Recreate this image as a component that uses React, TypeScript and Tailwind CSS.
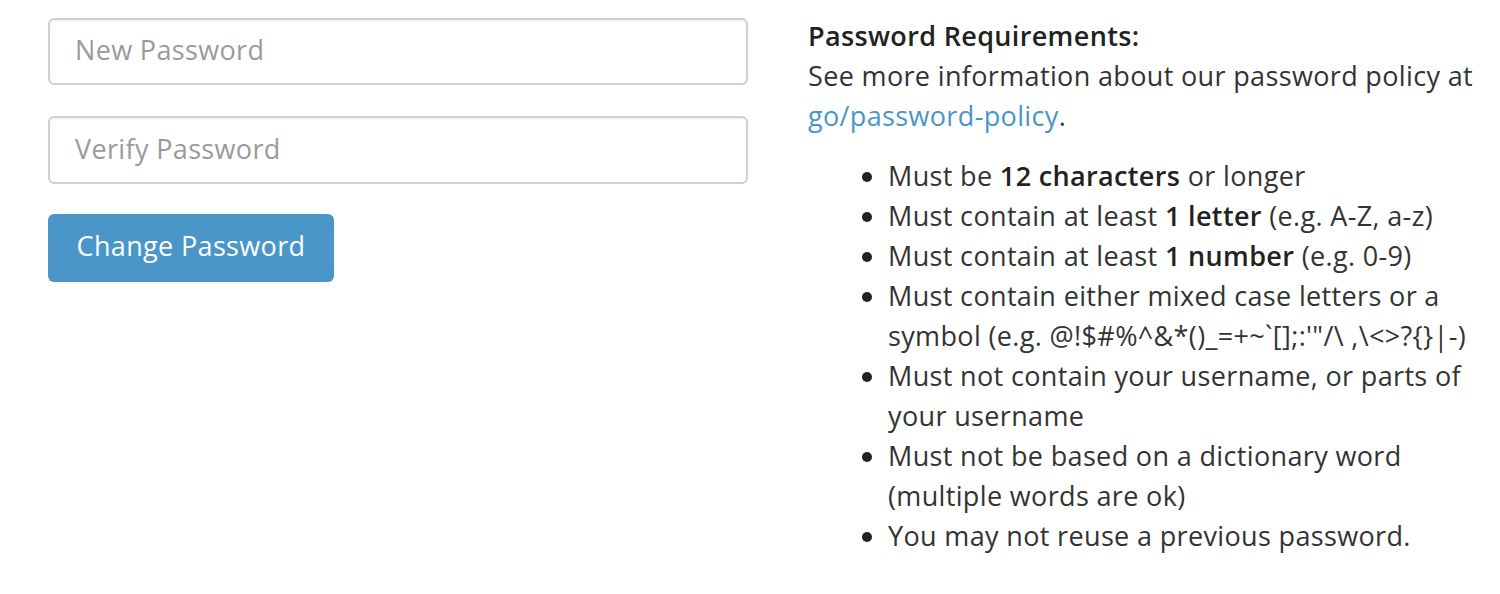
export default function App() {
  const items: React.ReactNode[] = [
    <>Must be <b className="font-semibold text-[#222]">12 characters</b> or longer</>,
    <>Must contain at least <b className="font-semibold text-[#222]">1 letter</b> (e.g. A-Z, a-z)</>,
    <>Must contain at least <b className="font-semibold text-[#222]">1 number</b> (e.g. 0-9)</>,
    <>Must contain either mixed case letters or a symbol (e.g. @!$#%^&amp;*()_=+~`[];:'"/\ ,\&lt;&gt;?{'{}'}|-)</>,
    <>Must not contain your username, or parts of your username</>,
    <>Must not be based on a dictionary word (multiple words are ok)</>,
    <>You may not reuse a previous password.</>,
  ]

  return (
    <div className="min-h-[594px] bg-white font-['Open_Sans',sans-serif] text-[27px] leading-[40px] tracking-[0.35px] text-[#333]">
      <div className="flex gap-[60px] pl-[48px] pt-[18px]">
        <form className="flex w-[700px] shrink-0 flex-col" onSubmit={(e) => e.preventDefault()}>
          <input
            type="password"
            placeholder="New Password"
            className="h-[67px] w-full rounded-[6px] border-2 border-[#d0d0d0] px-[25px] pb-[4px] text-[27px] tracking-[0.35px] text-[#333] shadow-[inset_0_1px_2px_rgba(0,0,0,0.08)] outline-none placeholder:text-[#9a9a9a]"
          />
          <input
            type="password"
            placeholder="Verify Password"
            className="mt-[31px] h-[68px] w-full rounded-[6px] border-2 border-[#d0d0d0] px-[25px] pb-[4px] text-[27px] tracking-[0.35px] text-[#333] shadow-[inset_0_1px_2px_rgba(0,0,0,0.08)] outline-none placeholder:text-[#9a9a9a]"
          />
          <button
            type="submit"
            className="mt-[30px] h-[68px] w-[286px] rounded-[6px] bg-[#4a96c9] pb-[4px] text-[27px] tracking-[0.35px] text-white"
          >
            Change Password
          </button>
        </form>

        <div className="-mt-[2px] w-[690px]">
          <h3 className="font-semibold text-[#222]">Password Requirements:</h3>
          <p>
            See more information about our password policy at{' '}
            <a href="#" className="text-[#4a96c9]">go/password-policy</a>.
          </p>
          <ul className="mt-[20px] list-disc pl-[80px] marker:text-[#222]">
            {items.map((item, i) => (
              <li key={i} className="w-[590px]">{item}</li>
            ))}
          </ul>
        </div>
      </div>
    </div>
  )
}
